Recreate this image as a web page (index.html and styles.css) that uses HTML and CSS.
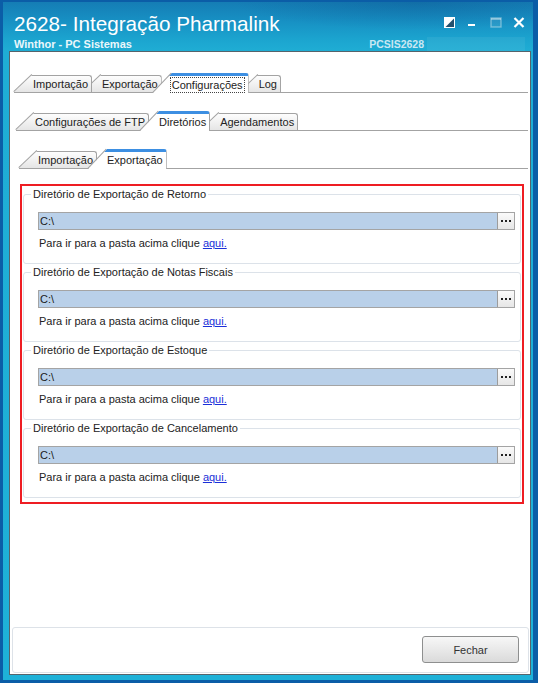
FILE: index.html
```html
<!DOCTYPE html>
<html>
	<head>
		<meta charset="utf-8">
		<title>2628- Integração Pharmalink</title>
		<link rel="stylesheet" href="styles.css">
	</head>
	<body>
		<div class="window">
			<div class="frame">
				<div class="titlebar">
					<div class="title-row">
						<h1 class="title">2628- Integração Pharmalink</h1>
						<div class="controls">
							<svg class="ctl-skin" width="11" height="11" viewBox="0 0 11 11"><rect x="0.5" y="0.5" width="10" height="10" fill="#fff" stroke="#fff"/><path d="M10 1.5 L10 10 L1.5 10 Z" fill="#24506d"/></svg>
							<svg class="ctl-min" width="7" height="11" viewBox="0 0 7 11"><rect x="0" y="7" width="7" height="2" fill="#fff"/></svg>
							<svg class="ctl-max" width="12" height="11" viewBox="0 0 12 11"><rect x="1" y="1" width="10" height="9" fill="rgba(255,255,255,0.08)" stroke="rgba(220,235,240,0.45)" stroke-width="1.4"/><rect x="1" y="1" width="10" height="2" fill="rgba(220,235,240,0.45)"/></svg>
							<svg class="ctl-close" width="12" height="11" viewBox="0 0 12 11"><path d="M1.5 1 L10.5 10 M10.5 1 L1.5 10" stroke="#fff" stroke-width="2.2"/></svg>
						</div>
					</div>
					<div class="sub-row">
						<span class="product">Winthor - PC Sistemas</span>
						<span class="code">PCSIS2628</span>
						<span class="code-box"></span>
					</div>
					<div class="accent"></div>
				</div>
				<div class="client">
					<div class="content">
						<div class="tabs tabs-main">
							<div class="tab">Importação</div>
							<div class="tab">Exportação</div>
							<div class="tab active"><span class="focus">Configurações</span></div>
							<div class="tab">Log</div>
						</div>
						<div class="tabs tabs-sub">
							<div class="tab">Configurações de FTP</div>
							<div class="tab active">Diretórios</div>
							<div class="tab">Agendamentos</div>
						</div>
						<div class="tabs tabs-inner">
							<div class="tab">Importação</div>
							<div class="tab active">Exportação</div>
						</div>

						<div class="outline">
							<div class="group">
								<div class="group-title">Diretório de Exportação de Retorno</div>
								<div class="path"><span class="path-value">C:\</span><span class="browse"><svg width="11" height="2" viewBox="0 0 11 2"><rect x="0" y="0" width="2" height="2" fill="#222"/><rect x="4" y="0" width="2" height="2" fill="#222"/><rect x="8" y="0" width="2" height="2" fill="#222"/></svg></span></div>
								<p class="hint">Para ir para a pasta acima clique <a href="#">aqui.</a></p>
							</div>
							<div class="group">
								<div class="group-title">Diretório de Exportação de Notas Fiscais</div>
								<div class="path"><span class="path-value">C:\</span><span class="browse"><svg width="11" height="2" viewBox="0 0 11 2"><rect x="0" y="0" width="2" height="2" fill="#222"/><rect x="4" y="0" width="2" height="2" fill="#222"/><rect x="8" y="0" width="2" height="2" fill="#222"/></svg></span></div>
								<p class="hint">Para ir para a pasta acima clique <a href="#">aqui.</a></p>
							</div>
							<div class="group">
								<div class="group-title">Diretório de Exportação de Estoque</div>
								<div class="path"><span class="path-value">C:\</span><span class="browse"><svg width="11" height="2" viewBox="0 0 11 2"><rect x="0" y="0" width="2" height="2" fill="#222"/><rect x="4" y="0" width="2" height="2" fill="#222"/><rect x="8" y="0" width="2" height="2" fill="#222"/></svg></span></div>
								<p class="hint">Para ir para a pasta acima clique <a href="#">aqui.</a></p>
							</div>
							<div class="group">
								<div class="group-title">Diretório de Exportação de Cancelamento</div>
								<div class="path"><span class="path-value">C:\</span><span class="browse"><svg width="11" height="2" viewBox="0 0 11 2"><rect x="0" y="0" width="2" height="2" fill="#222"/><rect x="4" y="0" width="2" height="2" fill="#222"/><rect x="8" y="0" width="2" height="2" fill="#222"/></svg></span></div>
								<p class="hint">Para ir para a pasta acima clique <a href="#">aqui.</a></p>
							</div>
						</div>

						<div class="footer">
							<button class="btn">Fechar</button>
						</div>
					</div>
				</div>
			</div>
		</div>
	</body>
</html>
```

FILE: styles.css
```css
* {
	box-sizing: border-box;
}
body {
	margin: 0;
	font-family: "Liberation Sans", Arial, sans-serif;
	font-size: 11px;
	color: #1e1e1e;
	background: #0b5ea8;
}

/* window frame */
.window {
	width: 538px;
	height: 683px;
	padding: 2px 5px 3px 3px;
	background: #0b5da7;
}
.frame {
	height: 100%;
	display: flex;
	flex-direction: column;
}
.titlebar {
	height: 49px;
	display: flex;
	flex-direction: column;
	padding: 10px 8px 0 11px;
	color: #fff;
	background:
		radial-gradient(ellipse 260px 40px at 78% 0%, rgba(8, 70, 130, 0.28), rgba(8, 70, 130, 0) 70%),
		linear-gradient(180deg, #157db5 0%, #1791c4 40%, #1ca6d0 80%, #1fadd4 100%);
}
.title-row {
	display: flex;
	align-items: flex-start;
}
.title {
	flex: 1;
	margin: 0;
	font-size: 20.7px;
	font-weight: normal;
	line-height: 24px;
	color: #fff;
}
.controls {
	display: flex;
	margin-top: 5px;
}
.ctl-min {
	margin-left: 13px;
}
.ctl-max {
	margin-left: 15px;
}
.ctl-close {
	margin-left: 11px;
}
.sub-row {
	display: flex;
	align-items: center;
	margin-top: 1px;
	font-weight: bold;
	line-height: 13px;
}
.product {
	color: #eaf7fb;
}
.code {
	margin-left: auto;
	font-size: 10.5px;
	color: #c9e7f2;
}
.code-box {
	width: 98px;
	height: 14px;
	margin-left: 3px;
	background: rgba(255, 255, 255, 0.06);
}
.accent {
	height: 2px;
	margin: auto -5px 0 186px;
	background: linear-gradient(90deg, rgba(240, 150, 30, 0), #f29a1e 12%, #f4a21f 100%);
}
.client {
	flex: 1;
	display: flex;
	padding: 0 2px 5px 6px;
	background: linear-gradient(180deg, #1fadd5, #1eb1d8);
}
.content {
	flex: 1;
	display: flex;
	flex-direction: column;
	padding-bottom: 1px;
	background: #fff;
	border: 1px solid #56636b;
}

/* tabs */
.tabs {
	display: flex;
	align-items: flex-end;
	height: 20px;
	border-bottom: 1px solid #a3a3a3;
}
.tabs-main {
	margin: 21px 2px 0 4px;
}
.tabs-sub {
	margin: 18px 2px 0 6px;
}
.tabs-inner {
	margin: 18px 2px 0 9px;
}
.tab {
	position: relative;
	height: 17px;
	padding: 2px 4px 0 19px;
	margin-left: -9px;
	line-height: 15px;
	color: #222;
	white-space: nowrap;
}
.tab:first-child {
	margin-left: 0;
}
.tab:nth-child(1) {
	z-index: 5;
}
.tab:nth-child(2) {
	z-index: 4;
}
.tab:nth-child(3) {
	z-index: 3;
}
.tab:nth-child(4) {
	z-index: 2;
}
.tab::before {
	content: "";
	position: absolute;
	top: 0;
	left: 0;
	right: 0;
	bottom: 0;
	z-index: -1;
	border-top: 1px solid #a3a3a3;
	border-right: 1px solid #a3a3a3;
	border-top-right-radius: 3px;
	background: linear-gradient(180deg, #fdfdfd, #e5e5e5);
	clip-path: polygon(0 100%, 18px 0, 100% 0, 100% 100%);
}
.tab::after {
	content: "";
	position: absolute;
	left: 0;
	bottom: 0;
	width: 25px;
	height: 1px;
	background: #a3a3a3;
	transform-origin: 0 100%;
	transform: rotate(-43.4deg);
}
.tab.active {
	z-index: 9;
	height: 20px;
	padding-top: 4px;
	margin-bottom: -1px;
}
.tab.active::before {
	border-top: 3px solid #3d8fe2;
	border-top-left-radius: 2px;
	background: #fff;
	clip-path: polygon(0 100%, 19px 0, 100% 0, 100% 100%);
}
.tab.active::after {
	width: 27px;
	transform: rotate(-46.5deg);
}
.focus {
	display: inline-block;
	line-height: 14px;
	padding: 0 1px;
	margin-left: -2px;
	border: 1px dotted #444;
}

/* directory groups */
.outline {
	margin: 15px 6px 0 10px;
	padding: 0 1px 4px;
	border: 2px solid #ee1d23;
}
.group {
	margin-top: 8px;
	padding: 0 5px 13px 14px;
	border: 1px solid #dce2e9;
	border-radius: 3px;
}
.group-title {
	width: fit-content;
	margin: -8px 0 0 -7px;
	padding: 0 2px;
	line-height: 14px;
	background: #fff;
	color: #222;
}
.path {
	display: flex;
	height: 18px;
	margin-top: 11px;
	border: 1px solid #a4a4a4;
	background: #b9d0e9;
}
.path-value {
	flex: 1;
	padding-left: 1px;
	line-height: 16px;
	color: #1a1a1a;
}
.browse {
	width: 17px;
	display: flex;
	align-items: center;
	justify-content: center;
	border-left: 1px solid #9c9c9c;
	background: linear-gradient(180deg, #fafafa, #e6e6e6);
}
.hint {
	margin: 6px 0 0 1px;
	line-height: 14px;
	color: #222;
}
.hint a {
	color: #1b2fd8;
}

/* footer */
.footer {
	display: flex;
	justify-content: flex-end;
	margin: auto 1px 0 2px;
	padding: 8px 9px 9px;
	border: 1px solid #dde2e8;
	border-radius: 3px;
}
.btn {
	width: 97px;
	height: 27px;
	border: 1px solid #8e8f8f;
	border-radius: 3px;
	background: linear-gradient(180deg, #f7f7f7, #e9e9e9 50%, #dadada);
	font: inherit;
	color: #333;
}
```
